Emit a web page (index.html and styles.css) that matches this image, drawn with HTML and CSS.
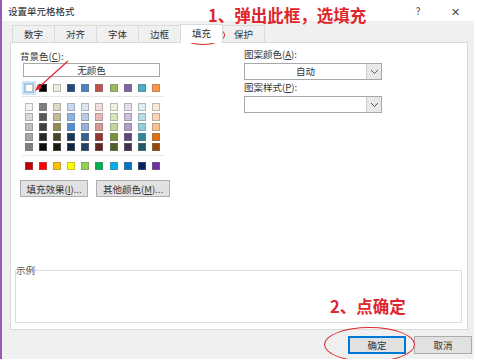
FILE: index.html
```html
<!DOCTYPE html>
<html lang="zh-CN">
<head>
    <meta charset="UTF-8">
    <title>设置单元格格式</title>
    <link rel="stylesheet" href="styles.css">
</head>
<body>
    <div class="dialog">
        <!-- Title bar -->
        <div class="titlebar">
            <span class="title">设置单元格格式</span>
            <span class="title-btn help">?</span>
            <span class="title-btn close">✕</span>
        </div>

        <!-- Tabs -->
        <ul class="tabs">
            <li>数字</li>
            <li>对齐</li>
            <li>字体</li>
            <li>边框</li>
            <li class="active">填充</li>
            <li>保护</li>
        </ul>

        <div class="panel">
            <div class="panel-cols">
                <div class="col-left">
                    <div class="label">背景色(<u>C</u>):</div>
                    <div class="no-color">无颜色</div>

                    <div class="swatch-row theme">
                        <span class="swatch picked" style="background:#ffffff"></span>
                        <span class="swatch" style="background:#000000"></span>
                        <span class="swatch" style="background:#eeece1"></span>
                        <span class="swatch" style="background:#1f497d"></span>
                        <span class="swatch" style="background:#4f81bd"></span>
                        <span class="swatch" style="background:#c0504d"></span>
                        <span class="swatch" style="background:#9bbb59"></span>
                        <span class="swatch" style="background:#8064a2"></span>
                        <span class="swatch" style="background:#4bacc6"></span>
                        <span class="swatch" style="background:#f79646"></span>
                    </div>
                    <div class="sep"></div>

                    <div class="swatch-grid">
                        <span class="swatch" style="background:#f2f2f2"></span>
                        <span class="swatch" style="background:#7f7f7f"></span>
                        <span class="swatch" style="background:#ddd9c4"></span>
                        <span class="swatch" style="background:#c6d9f0"></span>
                        <span class="swatch" style="background:#dce6f1"></span>
                        <span class="swatch" style="background:#f2dcdb"></span>
                        <span class="swatch" style="background:#ebf1de"></span>
                        <span class="swatch" style="background:#e4dfec"></span>
                        <span class="swatch" style="background:#daeef3"></span>
                        <span class="swatch" style="background:#fde9d9"></span>

                        <span class="swatch" style="background:#d9d9d9"></span>
                        <span class="swatch" style="background:#595959"></span>
                        <span class="swatch" style="background:#c4bd97"></span>
                        <span class="swatch" style="background:#8db4e2"></span>
                        <span class="swatch" style="background:#b8cce4"></span>
                        <span class="swatch" style="background:#e6b8b7"></span>
                        <span class="swatch" style="background:#d8e4bc"></span>
                        <span class="swatch" style="background:#ccc0da"></span>
                        <span class="swatch" style="background:#b7dee8"></span>
                        <span class="swatch" style="background:#fcd5b4"></span>

                        <span class="swatch" style="background:#bfbfbf"></span>
                        <span class="swatch" style="background:#404040"></span>
                        <span class="swatch" style="background:#948a54"></span>
                        <span class="swatch" style="background:#538dd5"></span>
                        <span class="swatch" style="background:#95b3d7"></span>
                        <span class="swatch" style="background:#da9694"></span>
                        <span class="swatch" style="background:#c4d79b"></span>
                        <span class="swatch" style="background:#b1a0c7"></span>
                        <span class="swatch" style="background:#92cddc"></span>
                        <span class="swatch" style="background:#fabf8f"></span>

                        <span class="swatch" style="background:#a6a6a6"></span>
                        <span class="swatch" style="background:#262626"></span>
                        <span class="swatch" style="background:#494529"></span>
                        <span class="swatch" style="background:#16365c"></span>
                        <span class="swatch" style="background:#366092"></span>
                        <span class="swatch" style="background:#963634"></span>
                        <span class="swatch" style="background:#76933c"></span>
                        <span class="swatch" style="background:#60497a"></span>
                        <span class="swatch" style="background:#31869b"></span>
                        <span class="swatch" style="background:#e26b0a"></span>

                        <span class="swatch" style="background:#808080"></span>
                        <span class="swatch" style="background:#0d0d0d"></span>
                        <span class="swatch" style="background:#1d1b10"></span>
                        <span class="swatch" style="background:#0f243e"></span>
                        <span class="swatch" style="background:#244062"></span>
                        <span class="swatch" style="background:#632523"></span>
                        <span class="swatch" style="background:#4f6228"></span>
                        <span class="swatch" style="background:#403151"></span>
                        <span class="swatch" style="background:#215967"></span>
                        <span class="swatch" style="background:#974706"></span>
                    </div>
                    <div class="sep sep-low"></div>

                    <div class="swatch-row standard">
                        <span class="swatch" style="background:#c00000"></span>
                        <span class="swatch" style="background:#ff0000"></span>
                        <span class="swatch" style="background:#ffc000"></span>
                        <span class="swatch" style="background:#ffff00"></span>
                        <span class="swatch" style="background:#92d050"></span>
                        <span class="swatch" style="background:#00b050"></span>
                        <span class="swatch" style="background:#00b0f0"></span>
                        <span class="swatch" style="background:#0070c0"></span>
                        <span class="swatch" style="background:#002060"></span>
                        <span class="swatch" style="background:#7030a0"></span>
                    </div>

                    <div class="btn-row">
                        <button class="btn btn-effect">填充效果(<u>I</u>)...</button>
                        <button class="btn btn-more">其他颜色(<u>M</u>)...</button>
                    </div>
                </div>

                <div class="col-right">
                    <div class="label">图案颜色(<u>A</u>):</div>
                    <div class="select">
                        <span class="select-value">自动</span>
                        <span class="select-arrow">
                            <svg width="9" height="6" viewBox="0 0 9 6"><path d="M1 1 L4.5 4.5 L8 1" fill="none" stroke="#555" stroke-width="1"/></svg>
                        </span>
                    </div>
                    <div class="label">图案样式(<u>P</u>):</div>
                    <div class="select">
                        <span class="select-value"></span>
                        <span class="select-arrow">
                            <svg width="9" height="6" viewBox="0 0 9 6"><path d="M1 1 L4.5 4.5 L8 1" fill="none" stroke="#555" stroke-width="1"/></svg>
                        </span>
                    </div>
                </div>
            </div>

            <fieldset class="sample">
                <legend>示例</legend>
            </fieldset>
        </div>

        <div class="footer">
            <button class="btn btn-ok">确定</button>
            <button class="btn btn-cancel">取消</button>
        </div>

        <!-- red annotations drawn over the dialog -->
        <div class="note note-1">1、弹出此框，选填充</div>
        <div class="note note-2">2、点确定</div>
        <div class="ring ring-tab"></div>
        <div class="ring ring-ok"></div>
        <svg class="arrow" width="40" height="34" viewBox="0 0 40 34">
            <line x1="36" y1="2" x2="6" y2="29" stroke="#e0262c" stroke-width="1.2"/>
            <path d="M3 32 L6 25 L10 29 Z" fill="#e0262c"/>
        </svg>
    </div>
</body>
</html>
```

FILE: styles.css
```css
* {
    margin: 0;
    padding: 0;
    box-sizing: border-box;
}

body {
    font-family: "Noto Sans CJK SC", "Noto Sans", sans-serif;
    font-size: 9.5px;
    color: #333;
    background: #fff;
}

u {
    text-decoration: underline;
}

.dialog {
    position: relative;
    width: 474px;
    height: 359px;
    background: #f0f0f0;
    border-left: 2px solid #9b59b6;
    display: flex;
    flex-direction: column;
}

/* Title bar */
.titlebar {
    height: 21px;
    background: #fff;
    display: flex;
    align-items: center;
    padding-left: 6px;
}
.title {
    flex: 1;
    color: #222;
}
.title-btn {
    width: 36px;
    text-align: center;
    color: #444;
    font-size: 10px;
}
.close {
    width: 38px;
    font-size: 11px;
}

/* Tabs */
.tabs {
    list-style: none;
    display: flex;
    align-items: flex-end;
    height: 21px;
    padding-left: 10px;
}
.tabs li {
    width: 43px;
    height: 17px;
    line-height: 16px;
    text-align: center;
    border: 1px solid #dadada;
    border-bottom: none;
    margin-right: -1px;
    background: #f0f0f0;
    color: #333;
}
.tabs li.active {
    height: 19px;
    background: #fff;
    position: relative;
    z-index: 1;
    margin-bottom: -1px;
}

/* Panel */
.panel {
    height: 288px;
    margin: 0 6px 0 8px;
    background: #fff;
    border: 1px solid #dadada;
    display: flex;
    flex-direction: column;
    padding: 7px 5px 6px 4px;
}
.panel-cols {
    display: flex;
}
.col-left {
    width: 229px;
    padding-left: 5px;
}
.col-right {
    width: 138px;
    margin-top: -2px;
}
.label {
    line-height: 13px;
    color: #333;
}

.no-color {
    width: 137px;
    height: 14px;
    margin-left: 3px;
    border: 1px solid #a8a8a8;
    text-align: center;
    line-height: 12px;
}

.swatch-row,
.swatch-grid {
    display: grid;
    grid-template-columns: repeat(10, 8px);
    column-gap: 6.1px;
    margin-left: 5px;
}
.swatch-grid {
    row-gap: 2px;
}
.swatch {
    display: block;
    width: 8px;
    height: 8px;
    border: 1px solid rgba(120, 120, 120, 0.45);
}
.theme {
    margin-top: 7px;
}
.swatch.picked {
    outline: 2px solid #cce4f7;
    outline-offset: 1px;
    box-shadow: 0 0 0 3px #99c9ef;
}
.sep {
    width: 142px;
    height: 1px;
    margin: 4px 0 6px 2px;
    background: #e6e6e6;
}
.sep-low {
    margin: 4px 0 6px 2px;
}

.btn-row {
    display: flex;
    gap: 8px;
    margin-top: 10px;
}
.btn {
    font-family: inherit;
    font-size: 9.5px;
    color: #333;
    height: 17px;
    background: #e1e1e1;
    border: 1px solid #adadad;
}
.btn-effect {
    width: 68px;
}
.btn-more {
    width: 74px;
}

/* Selects on the right */
.select {
    display: flex;
    width: 138px;
    height: 17px;
    border: 1px solid #a8a8a8;
    margin: 2px 0 1px;
}
.select-value {
    flex: 1;
    text-align: center;
    line-height: 15px;
}
.select-arrow {
    width: 15px;
    background: #e8e8e8;
    border-left: 1px solid #cfcfcf;
    display: flex;
    align-items: center;
    justify-content: center;
}

/* Sample box */
.sample {
    margin-top: auto;
    height: 58px;
    border: 1px solid #dcdcdc;
    padding: 0;
}
.sample legend {
    color: #555;
    padding: 0;
    margin-left: 0;
    line-height: 10px;
}

/* Footer buttons */
.footer {
    flex: 1;
    display: flex;
    justify-content: flex-end;
    align-items: center;
    gap: 8px;
    padding-right: 2px;
}
.btn-ok,
.btn-cancel {
    width: 58px;
    height: 18px;
}
.btn-ok {
    border: 2px solid #0078d7;
}

/* Red annotations */
.note {
    position: absolute;
    color: #e0262c;
    font-weight: bold;
    font-size: 16.5px;
    line-height: 18px;
    white-space: nowrap;
}
.note-1 {
    left: 206px;
    top: 6px;
}
.note-2 {
    left: 328px;
    top: 297px;
}
.ring {
    position: absolute;
    border: 1px solid #e0262c;
    border-radius: 50%;
}
.ring-tab {
    left: 179px;
    top: 25px;
    width: 44px;
    height: 20px;
}
.ring-ok {
    left: 322px;
    top: 327px;
    width: 91px;
    height: 35px;
}
.arrow {
    position: absolute;
    left: 30px;
    top: 59px;
}
```
